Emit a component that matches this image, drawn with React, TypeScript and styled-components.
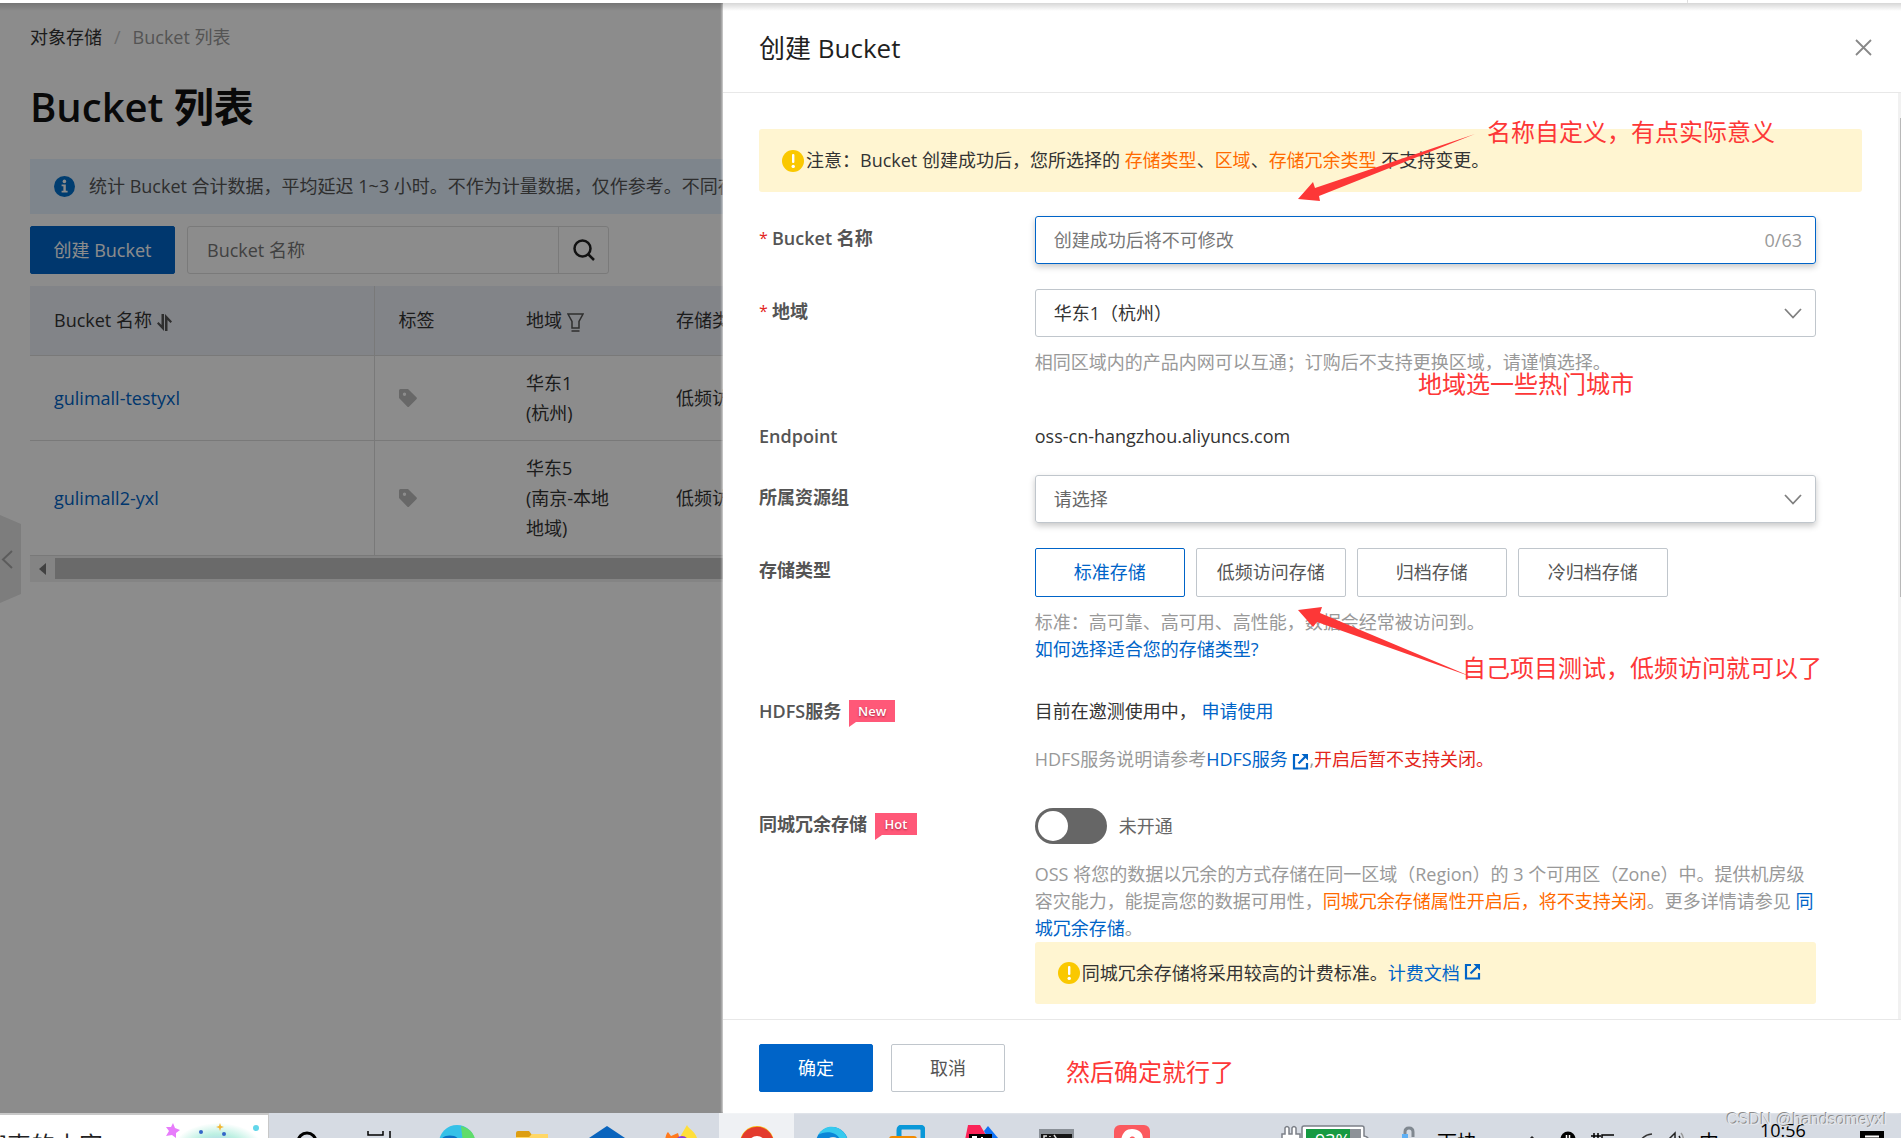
import React from "react";
import styled, { createGlobalStyle } from "styled-components";

const GlobalStyle = createGlobalStyle`
  *, *::before, *::after { box-sizing: border-box; }
  body {
    margin: 0;
    background: #fff;
    color: #333;
    font: 18px/27px "Open Sans", "Noto Sans CJK SC", sans-serif;
  }
  button, input, select { font: inherit; color: inherit; margin: 0; }
  a { color: #0064c8; text-decoration: none; }
  h1, h2, p { margin: 0; font-weight: 400; }
`;

/* ---------- shell ---------- */

const Screen = styled.div`
  position: relative;
  display: grid;
  grid-template-rows: 3px minmax(0, 1fr) 25px;
  height: 100vh;
  overflow: hidden;
`;

const TopStrip = styled.div`
  display: flex;
  justify-content: flex-end;
  background: #fff;
`;

const StripEnd = styled.div`
  width: 214px;
  border-left: 1px solid #ddd;
`;

const Main = styled.main`
  position: relative;
  display: grid;
  grid-template-columns: 723px minmax(0, 1fr);
  min-height: 0;

  &::after {
    content: "";
    position: absolute;
    inset: 0 0 auto 0;
    height: 8px;
    background: linear-gradient(rgba(0, 0, 0, 0.16), rgba(0, 0, 0, 0));
  }
`;

/* ---------- bucket list page ---------- */

const ListPage = styled.section`
  position: relative;
  overflow: hidden;
  padding: 21px 0 0 30px;
  background: #fff;
`;

const Mask = styled.div`
  position: absolute;
  inset: 0;
  background: rgba(0, 0, 0, 0.45);
`;

const Breadcrumb = styled.nav`
  display: flex;
  gap: 12px;
  color: #999;

  a { color: #333; }
  span { color: #c4c4c4; }
`;

const PageTitle = styled.h1`
  margin: 26px 0 22px;
  color: #111;
  font-size: 40px;
  font-weight: 600;
  line-height: 60px;
`;

const InfoBar = styled.div`
  display: flex;
  align-items: center;
  gap: 14px;
  height: 55px;
  padding-left: 24px;
  background: #e5f2ff;
  color: #555;
  white-space: nowrap;

  svg { flex: none; }
`;

const Toolbar = styled.div`
  display: flex;
  gap: 12px;
  margin: 12px 0;
`;

const Button = styled.button<{ $primary?: boolean; $width: number }>`
  width: ${(p) => p.$width}px;
  height: 48px;
  padding: 0;
  border: 1px solid ${(p) => (p.$primary ? "#0064c8" : "#c0c6cc")};
  border-radius: 2px;
  background: ${(p) => (p.$primary ? "#0064c8" : "#fff")};
  color: ${(p) => (p.$primary ? "#fff" : "#555")};
`;

const SearchBox = styled.div`
  display: flex;
  width: 422px;
  height: 48px;
  border: 1px solid #dedede;
  border-radius: 3px;

  input {
    flex: 1;
    min-width: 0;
    padding: 0 19px;
    border: 0;
    background: none;
    outline: 0;
  }
  input::placeholder { color: #777; opacity: 1; }
  button {
    display: grid;
    place-items: center;
    width: 50px;
    padding: 0;
    border: 0;
    border-left: 1px solid #dedede;
    background: none;
  }
`;

const BucketTable = styled.table`
  width: 860px;
  table-layout: fixed;
  border-collapse: collapse;
  line-height: 30px;

  th, td {
    padding: 12px 24px;
    border-bottom: 1px solid #dcdcdc;
    text-align: left;
    font-weight: 400;
    white-space: nowrap;
  }
  th { height: 69px; background: #edf0f7; }
  th:first-child, td:first-child { border-right: 1px solid #dcdcdc; }
  th svg { vertical-align: middle; }
  td svg { display: block; }
`;

const HScroll = styled.div`
  display: flex;
  align-items: center;
  gap: 9px;
  width: 860px;
  height: 26px;
  padding-left: 9px;
  background: #f1f1f1;
`;

const HThumb = styled.div`
  flex: 1;
  height: 21px;
  background: #c1c1c1;
`;

const CollapseTab = styled.button`
  position: absolute;
  left: 0;
  top: 512px;
  width: 21px;
  height: 88px;
  padding: 0;
  border: 0;
  background: none;
`;

/* ---------- drawer ---------- */

const Drawer = styled.section`
  position: relative;
  display: flex;
  flex-direction: column;
  min-height: 0;
  background: #fff;
  box-shadow: -1px 0 2px rgba(255, 255, 255, 0.7);
`;

const DrawerHeader = styled.header`
  display: flex;
  align-items: center;
  justify-content: space-between;
  height: 90px;
  padding: 0 29px 0 36px;
  border-bottom: 1px solid #e8e8e8;

  h2 { color: #1f1f1f; font-size: 26px; line-height: 36px; }
  button {
    display: grid;
    padding: 0;
    border: 0;
    background: none;
  }
`;

const DrawerBody = styled.div`
  display: flex;
  flex: 1;
  min-height: 0;
  overflow: hidden;
`;

const Form = styled.form`
  flex: 1;
  min-width: 0;
  padding: 36px;
`;

const ScrollTrack = styled.div`
  width: 3px;
  padding: 25px 0 0 2px;
  background: #f1f1f1;
`;

const ScrollThumb = styled.div`
  height: 479px;
  background: #b8b8b8;
`;

const Notice = styled.div<{ $spaced?: boolean }>`
  display: flex;
  align-items: center;
  gap: 2px;
  height: ${(p) => (p.$spaced ? 63 : 62)}px;
  margin-bottom: ${(p) => (p.$spaced ? 24 : 0)}px;
  padding-left: 23px;
  border-radius: 3px;
  background: #fff5d1;

  svg { flex: none; }
`;

const Warn = styled.span`
  color: #ff6a00;
`;

const Danger = styled.span`
  color: #e3251b;
`;

const Row = styled.div<{ $after?: number }>`
  display: grid;
  grid-template-columns: 6fr 17fr 1fr;
  margin-bottom: ${(p) => p.$after ?? 25}px;
`;

const Label = styled.label<{ $top?: number }>`
  display: flex;
  align-items: flex-start;
  padding-top: ${(p) => p.$top ?? 0}px;
  color: #555;
  font-weight: 600;
`;

const Star = styled.span`
  width: 13px;
  color: #e3251b;
  font-size: 16px;
  font-weight: 400;
`;

const Tag = styled.span<{ $width: number }>`
  position: relative;
  width: ${(p) => p.$width}px;
  height: 22px;
  margin: 2px 0 0 8px;
  background: #ff5878;
  color: #fff;
  font-size: 13px;
  line-height: 22px;
  text-align: center;
  text-shadow: 0 1px 2px rgba(120, 0, 30, 0.6);

  &::after {
    content: "";
    position: absolute;
    left: 0;
    top: 22px;
    border-top: 5px solid #ff5878;
    border-right: 7px solid transparent;
  }
`;

const raised = "0 3px 6px rgba(0, 0, 0, 0.22)";

const NameBox = styled.div`
  display: flex;
  align-items: center;
  height: 48px;
  padding: 0 13px 0 18px;
  border: 1px solid #0064c8;
  border-radius: 3px;
  box-shadow: ${raised};
  color: #999;

  input {
    flex: 1;
    min-width: 0;
    padding: 0;
    border: 0;
    outline: 0;
    background: none;
  }
  input::placeholder { color: #777; opacity: 1; }
`;

const SelectBox = styled.div<{ $raised?: boolean }>`
  display: grid;
  align-items: center;
  height: 48px;
  border: 1px solid #c0c6cc;
  border-radius: 3px;
  box-shadow: ${(p) => (p.$raised ? raised : "none")};

  select, svg { grid-area: 1 / 1; }
  select {
    width: 100%;
    height: 46px;
    padding: 0 48px 0 18px;
    border: 0;
    outline: 0;
    appearance: none;
    background: none;
    color: ${(p) => (p.$raised ? "#666" : "#333")};
  }
  svg { justify-self: end; margin-right: 13px; pointer-events: none; }
`;

const Help = styled.p<{ $gap?: number }>`
  margin-top: ${(p) => p.$gap ?? 12}px;
  color: #999;

  svg { vertical-align: -4px; }
`;

const ChoiceRow = styled.div`
  display: flex;
  gap: 11px;
`;

const Choice = styled.label`
  display: grid;
  place-items: center;
  width: 150px;
  height: 49px;
  border: 1px solid #c0c6cc;
  border-radius: 2px;
  color: #555;

  input { position: absolute; opacity: 0; }
  &:has(input:checked) { border-color: #0064c8; color: #0064c8; }
`;

const SwitchRow = styled.div`
  display: flex;
  align-items: center;
  gap: 12px;
  color: #666;

  input {
    appearance: none;
    width: 72px;
    height: 36px;
    padding: 3px;
    border-radius: 18px;
    background: #666;
  }
  input::before {
    content: "";
    display: block;
    width: 30px;
    height: 30px;
    border-radius: 50%;
    background: #fff;
  }
`;

const DrawerFooter = styled.footer`
  display: flex;
  gap: 18px;
  height: 94px;
  padding: 24px 36px;
  border-top: 1px solid #e8e8e8;
`;

/* ---------- hand-made notes over the drawer ---------- */

const Note = styled.span<{ $x: number; $y: number }>`
  position: absolute;
  left: ${(p) => p.$x}px;
  top: ${(p) => p.$y}px;
  color: #fd3737;
  font-size: 24px;
  line-height: 36px;
  white-space: nowrap;
`;

const Arrow = styled.svg<{ $x: number; $y: number }>`
  position: absolute;
  left: ${(p) => p.$x}px;
  top: ${(p) => p.$y}px;
  fill: #fd3737;
`;

/* ---------- taskbar ---------- */

const Taskbar = styled.footer`
  display: flex;
  overflow: hidden;
  background: #d6dbe3;
  color: #000;
`;

const TaskSearch = styled.div`
  display: flex;
  justify-content: space-between;
  width: 269px;
  height: 60px;
  overflow: hidden;
  border: solid #c8c8c8;
  border-width: 2px 1px 0 0;
  background: #fff;
`;

const TaskSearchText = styled.span`
  width: 103px;
  direction: rtl;
  overflow: hidden;
  color: #222;
  font-size: 24px;
  line-height: 60px;
  white-space: nowrap;
`;

const TaskApp = styled.div<{ $active?: boolean }>`
  display: flex;
  justify-content: center;
  width: 75px;
  height: 60px;
  padding-top: 12px;
  background: ${(p) => (p.$active ? "#eff1f4" : "transparent")};
`;

const Tray = styled.div`
  display: flex;
  margin-left: auto;
`;

const TraySlot = styled.div<{ $width: number }>`
  width: ${(p) => p.$width}px;
  line-height: 34px;
  white-space: nowrap;
`;

const TrayText = styled(TraySlot)`
  padding-top: 13px;
  font-size: 20px;
`;

const Watermark = styled.span`
  position: absolute;
  right: 14px;
  bottom: 6px;
  color: #e4e6ea;
  font: 16px/24px "Liberation Sans", sans-serif;
  text-shadow: -1px -1px 0 #8c8c8c;
`;

/* ---------- icons ---------- */

const AlertIcon = () => (
  <svg width="22" height="22" viewBox="0 0 22 22">
    <circle cx="11" cy="11" r="11" fill="#fac800" />
    <rect x="10" y="4" width="2.4" height="9" rx="1" fill="#fff" />
    <circle cx="11.2" cy="16.4" r="1.7" fill="#fff" />
  </svg>
);

const InfoIcon = () => (
  <svg width="21" height="21" viewBox="0 0 21 21">
    <circle cx="10.5" cy="10.5" r="10.5" fill="#0070cc" />
    <circle cx="10.4" cy="5.4" r="1.8" fill="#fff" />
    <path d="M7.6 8.6h4.2v6.2h1.8v1.7H7.6v-1.7h1.8v-4.5H7.6z" fill="#fff" />
  </svg>
);

const ExternalIcon = () => (
  <svg width="17" height="17" viewBox="0 0 17 17" fill="none" stroke="#0064c8" strokeWidth="2.2">
    <path d="M7 2H2v13.500h13V10" />
    <path d="M6.500 10.500L14 3" />
    <path d="M9.500 1H16v6.500z" fill="#0064c8" stroke="none" />
  </svg>
);

const ChevronIcon = () => (
  <svg width="18" height="11" viewBox="0 0 18 11" fill="none" stroke="#808080" strokeWidth="1.800">
    <path d="M1 1l8 8.500L17 1" />
  </svg>
);

const TagIcon = () => (
  <svg width="18" height="18" viewBox="0 0 18 18">
    <path
      fillRule="evenodd"
      d="M0 1.500Q0 0 1.500 0H9l8.400 8.200q1 1 0 2L10.200 17.400q-1 1-2 0L0 9zM5.500 3.600a1.700 1.700 0 1 0 0 3.400a1.700 1.700 0 0 0 0-3.400z"
      fill="#bdbdbd"
    />
  </svg>
);

const SortIcon = () => (
  <svg width="15" height="17" viewBox="0 0 15 17" fill="#555">
    <path d="M4.500 0H7v17L0 9.500l1.500-1.500 3 3z" />
    <path d="M10.500 17H8V0l7 7.500L13.500 9l-3-3z" />
  </svg>
);

const FilterIcon = () => (
  <svg width="17" height="19" viewBox="0 0 17 19" fill="none" stroke="#555" strokeWidth="1.500">
    <path d="M1 1h15l-4 7.500V15H5V8.500z" />
    <path d="M4.500 18h8" />
  </svg>
);

const appIcons: { id: string; active?: boolean; art: React.ReactNode }[] = [
  { id: "cortana", art: <circle cx="18" cy="17" r="9" fill="none" stroke="#000" strokeWidth="3" /> },
  {
    id: "task-view",
    art: <path d="M4 6v4h15V6M4 14h15M26 6v7" fill="none" stroke="#000" strokeWidth="1.500" />,
  },
  {
    id: "edge",
    art: (
      <>
        <circle cx="18" cy="18" r="18" fill="#35c1e8" />
        <path d="M22 1c9 2 15 9 14 17H24z" fill="#5fdc6a" />
        <path d="M0 18c2-9 17-10 21-2v8H0z" fill="#0c71c4" />
      </>
    ),
  },
  {
    id: "explorer",
    art: (
      <>
        <path d="M2 8q0-2 2-2h11l3 4v4H2z" fill="#dd9e12" />
        <path d="M2 12h13l3-3h16v20H2z" fill="#ffd766" />
      </>
    ),
  },
  {
    id: "mail",
    art: (
      <>
        <path d="M0 13L18 1l18 12v10H0z" fill="#0a64bd" />
        <path d="M4 13h28v12H4z" fill="#fff" />
      </>
    ),
  },
  {
    id: "firefox",
    art: (
      <>
        <path d="M1 18c0-5 1-9 3-11l3 4 7-3 3 10z" fill="#ff7a1f" />
        <path d="M16 12L23 0c2 5 10 6 11 18H16z" fill="#ffdf3a" />
        <circle cx="18" cy="18" r="7" fill="#8c3bd6" />
      </>
    ),
  },
  {
    id: "chrome",
    active: true,
    art: (
      <>
        <circle cx="18" cy="18" r="17" fill="#fbc116" />
        <path d="M2 13a17 17 0 0 1 32 0H18l-8 8z" fill="#e33b2e" />
        <circle cx="18" cy="20" r="8" fill="#3f7de0" stroke="#fff" strokeWidth="2" />
      </>
    ),
  },
  {
    id: "swirl",
    art: (
      <>
        <circle cx="18" cy="18" r="16" fill="#0a86d8" />
        <path d="M4 10C12-3 30 0 34 16l-8-2c-5-8-15-8-22-4z" fill="#36c9ee" />
        <circle cx="19" cy="20" r="8" fill="#d6dbe3" />
      </>
    ),
  },
  {
    id: "vmware",
    art: (
      <>
        <rect x="10" y="2" width="24" height="24" rx="3" fill="none" stroke="#0a98d8" strokeWidth="5" />
        <rect x="0" y="11" width="28" height="20" rx="3" fill="#f18a00" />
      </>
    ),
  },
  {
    id: "idea",
    art: (
      <>
        <path d="M4 0h12l6 10L0 20z" fill="#fb2458" />
        <path d="M20 6l4-5 10 12-6 8z" fill="#0e72f6" />
        <rect x="5" y="9" width="23" height="20" fill="#000" />
        <path d="M8 12h5M10.500 12v8M18 12v8" stroke="#fff" strokeWidth="2" />
      </>
    ),
  },
  {
    id: "terminal",
    art: (
      <>
        <rect x="0" y="4" width="35" height="28" fill="#8a9097" />
        <rect x="2" y="9" width="31" height="20" fill="#151515" />
        <path d="M8 11H5v4M11 11v1M15 10l4 6" stroke="#ddd" strokeWidth="1.500" fill="none" />
      </>
    ),
  },
  {
    id: "netease",
    art: (
      <>
        <rect width="36" height="36" rx="6" fill="#fb5a5f" />
        <path
          d="M7 22C6 11 10 4 18 4c7 0 11 4 11 10v8H19c3-4 4-8 1-10-4-2-7 3-5 10z"
          fill="#fff"
        />
      </>
    ),
  },
];

const storageTypes = ["标准存储", "低频访问存储", "归档存储", "冷归档存储"];

const buckets = [
  { name: "gulimall-testyxl", region: ["华东1", "(杭州)"], type: "低频访问" },
  { name: "gulimall2-yxl", region: ["华东5", "(南京-本地", "地域)"], type: "低频访问" },
];

/* ---------- parts ---------- */

function BucketList() {
  return (
    <ListPage>
      <Breadcrumb aria-label="breadcrumb">
        <a href="#oss">对象存储</a>
        <span>/</span>
        Bucket 列表
      </Breadcrumb>
      <PageTitle>Bucket 列表</PageTitle>
      <InfoBar>
        <InfoIcon />
        统计 Bucket 合计数据，平均延迟 1~3 小时。不作为计量数据，仅作参考。不同存储
      </InfoBar>
      <Toolbar>
        <Button type="button" $primary $width={145}>创建 Bucket</Button>
        <SearchBox>
          <input aria-label="Bucket 名称" placeholder="Bucket 名称" />
          <button type="button" aria-label="搜索">
            <svg width="22" height="22" viewBox="0 0 22 22" fill="none" stroke="#222" strokeWidth="2.500">
              <circle cx="9.500" cy="9.500" r="8" />
              <path d="M15 15l6 6" />
            </svg>
          </button>
        </SearchBox>
      </Toolbar>
      <BucketTable>
        <colgroup>
          <col width="344" />
          <col width="128" />
          <col width="150" />
          <col />
        </colgroup>
        <thead>
          <tr>
            <th>Bucket 名称 <SortIcon /></th>
            <th>标签</th>
            <th>地域 <FilterIcon /></th>
            <th>存储类型</th>
          </tr>
        </thead>
        <tbody>
          {buckets.map((b) => (
            <tr key={b.name}>
              <td><a href="#bucket">{b.name}</a></td>
              <td><TagIcon /></td>
              <td>
                {b.region.map((line) => (
                  <div key={line}>{line}</div>
                ))}
              </td>
              <td>{b.type}</td>
            </tr>
          ))}
        </tbody>
      </BucketTable>
      <HScroll>
        <svg width="7" height="12" viewBox="0 0 7 12"><path d="M7 0v12L0 6z" fill="#777" /></svg>
        <HThumb />
      </HScroll>
      <CollapseTab type="button" aria-label="收起">
        <svg width="21" height="88" viewBox="0 0 21 88">
          <path d="M0 0l21 9v70L0 88z" fill="#e4e4e4" />
          <path d="M12 36L3 44.500l9 8.500" fill="none" stroke="#a8a8a8" strokeWidth="2" />
        </svg>
      </CollapseTab>
      <Mask />
    </ListPage>
  );
}

function CreateDrawer() {
  return (
    <Drawer>
      <DrawerHeader>
        <h2>创建 Bucket</h2>
        <button type="button" aria-label="关闭">
          <svg width="17" height="17" viewBox="0 0 17 17" stroke="#888" strokeWidth="1.800">
            <path d="M1 1l15 15M16 1L1 16" />
          </svg>
        </button>
      </DrawerHeader>
      <DrawerBody>
        <Form id="create-bucket">
          <Notice $spaced>
            <AlertIcon />
            <p>
              注意：Bucket 创建成功后，您所选择的 <Warn>存储类型</Warn>、<Warn>区域</Warn>、
              <Warn>存储冗余类型</Warn> 不支持变更。
            </p>
          </Notice>
          <Row>
            <Label $top={9} htmlFor="name"><Star>*</Star>Bucket 名称</Label>
            <NameBox>
              <input id="name" placeholder="创建成功后将不可修改" />
              0/63
            </NameBox>
          </Row>
          <Row $after={47}>
            <Label $top={9} htmlFor="region"><Star>*</Star>地域</Label>
            <div>
              <SelectBox>
                <select id="region"><option>华东1（杭州）</option></select>
                <ChevronIcon />
              </SelectBox>
              <Help>相同区域内的产品内网可以互通；订购后不支持更换区域，请谨慎选择。</Help>
            </div>
          </Row>
          <Row>
            <Label as="span">Endpoint</Label>
            <span>oss-cn-hangzhou.aliyuncs.com</span>
          </Row>
          <Row>
            <Label $top={9} htmlFor="group">所属资源组</Label>
            <SelectBox $raised>
              <select id="group"><option>请选择</option></select>
              <ChevronIcon />
            </SelectBox>
          </Row>
          <Row $after={35}>
            <Label as="span" $top={9}>存储类型</Label>
            <div>
              <ChoiceRow role="radiogroup" aria-label="存储类型">
                {storageTypes.map((type, i) => (
                  <Choice key={type}>
                    <input type="radio" name="storage" defaultChecked={i === 0} />
                    {type}
                  </Choice>
                ))}
              </ChoiceRow>
              <Help>
                标准：高可靠、高可用、高性能，数据会经常被访问到。
                <br />
                <a href="#types">如何选择适合您的存储类型?</a>
              </Help>
            </div>
          </Row>
          <Row $after={35}>
            <Label as="span">HDFS服务<Tag $width={46}>New</Tag></Label>
            <div>
              <p>目前在邀测使用中， <a href="#apply">申请使用</a></p>
              <Help $gap={21}>
                HDFS服务说明请参考<a href="#hdfs">HDFS服务 <ExternalIcon /></a>,<Danger>开启后暂不支持关闭。</Danger>
              </Help>
            </div>
          </Row>
          <Row>
            <Label $top={3} htmlFor="zrs">同城冗余存储<Tag $width={42}>Hot</Tag></Label>
            <div>
              <SwitchRow>
                <input id="zrs" type="checkbox" role="switch" />
                未开通
              </SwitchRow>
              <Help $gap={17}>
                OSS 将您的数据以冗余的方式存储在同一区域（Region）的 3 个可用区（Zone）中。提供机房级容灾能力，能提高您的数据可用性，
                <Warn>同城冗余存储属性开启后，将不支持关闭</Warn>。更多详情请参见 <a href="#zrs-doc">同城冗余存储</a>。
              </Help>
              <Notice>
                <AlertIcon />
                <p>同城冗余存储将采用较高的计费标准。<a href="#price">计费文档 <ExternalIcon /></a></p>
              </Notice>
            </div>
          </Row>
        </Form>
        <ScrollTrack><ScrollThumb /></ScrollTrack>
      </DrawerBody>
      <DrawerFooter>
        <Button form="create-bucket" type="button" $primary $width={114}>确定</Button>
        <Button type="button" $width={114}>取消</Button>
      </DrawerFooter>

      <Note $x={764} $y={111}>名称自定义，有点实际意义</Note>
      <Arrow $x={575} $y={130} width="178" height="70" viewBox="0 0 178 70">
        <path d="M0 66L15 49l2 6L177 1 21 63l1 5z" />
      </Arrow>
      <Note $x={695} $y={363}>地域选一些热门城市</Note>
      <Arrow $x={575} $y={603} width="174" height="70" viewBox="0 0 174 70">
        <path d="M0 4L24 1l-2 6 152 64L19 16l-4 5z" />
      </Arrow>
      <Note $x={739} $y={647}>自己项目测试，低频访问就可以了</Note>
      <Note $x={343} $y={1051}>然后确定就行了</Note>
    </Drawer>
  );
}

function DesktopTaskbar() {
  return (
    <Taskbar>
      <TaskSearch>
        <TaskSearchText>搜索的内容</TaskSearchText>
        <svg width="104" height="40" viewBox="0 0 104 40">
          <defs>
            <radialGradient id="glow">
              <stop offset="0" stopColor="#9db8f2" />
              <stop offset="0.600" stopColor="#bdf0e2" />
              <stop offset="1" stopColor="#fff" />
            </radialGradient>
          </defs>
          <ellipse cx="54" cy="36" rx="46" ry="28" fill="url(#glow)" />
          <path d="M9 8l2 5 5 2-4 3 0 5-4-3-6 1 3-5-3-4 5 0z" fill="#e77cfb" />
          <path d="M56 8l1 3 3 1-3 1-1 3-1-3-3-1 3-1z" fill="#f2b632" />
          <circle cx="37" cy="17" r="2" fill="#3366c8" />
          <circle cx="60" cy="19" r="2" fill="#3366c8" />
          <circle cx="92" cy="13" r="3" fill="#62d6ea" />
        </svg>
      </TaskSearch>
      {appIcons.map((app) => (
        <TaskApp key={app.id} $active={app.active}>
          <svg width="36" height="36" viewBox="0 0 36 36">{app.art}</svg>
        </TaskApp>
      ))}
      <Tray>
        <TraySlot $width={121}>
          <svg width="90" height="40" viewBox="0 0 90 40">
            <path
              d="M1 40V21h3v-6q2-3 4 0v6h3v-6q2-3 4 0v6h4v19zM21 40V15q0-2 2-2h58q2 0 2 2v8q5 1 5 5v12z"
              fill="#fff"
              stroke="#7c8088"
              strokeWidth="1.500"
            />
            <rect x="25" y="16" width="55" height="24" fill="#8d9298" />
            <rect x="25" y="16" width="44" height="24" fill="#169a42" />
            <text x="34" y="34" fill="#fff" fontSize="18">93%</text>
          </svg>
        </TraySlot>
        <TraySlot $width={35}>
          <svg width="13" height="40" viewBox="0 0 13 40" fill="none" strokeWidth="3">
            <path d="M3 26v-7q0-4 4-4t4 4v5" stroke="#808890" />
            <path d="M0 21h6v6H0z" fill="#5fb0f5" />
          </svg>
        </TraySlot>
        <TrayText $width={89}>下块</TrayText>
        <TraySlot $width={34}>
          <svg width="12" height="40" viewBox="0 0 12 40" fill="none" stroke="#222" strokeWidth="1.500">
            <path d="M1 29l5-5 5 5" />
          </svg>
        </TraySlot>
        <TraySlot $width={31}>
          <svg width="16" height="40" viewBox="0 0 16 40">
            <circle cx="8" cy="26" r="7.500" />
            <path d="M6.500 22v4M9.500 22v4" stroke="#fff" strokeWidth="1.500" />
          </svg>
        </TraySlot>
        <TraySlot $width={47}>
          <svg width="24" height="40" viewBox="0 0 24 40" fill="none" stroke="#000" strokeWidth="1.500">
            <path d="M3 20v10M7 20v10M0 23h10M11 30v-8h12" />
          </svg>
        </TraySlot>
        <TraySlot $width={29}>
          <svg width="16" height="40" viewBox="0 0 16 40" fill="none" stroke="#333" strokeWidth="1.500">
            <path d="M1 31Q4 22 14 21M8 31q2-4 6-5" />
          </svg>
        </TraySlot>
        <TraySlot $width={32}>
          <svg width="18" height="40" viewBox="0 0 18 40" fill="none" stroke="#222" strokeWidth="1.500">
            <path d="M1 27l7-7v12M12 23q2 3 0 6" />
            <path d="M14 20q4 5 1 10" stroke="#999" />
          </svg>
        </TraySlot>
        <TrayText $width={61}>中</TrayText>
        <TraySlot $width={100}>10:56</TraySlot>
        <TraySlot $width={41}>
          <svg width="24" height="40" viewBox="0 0 24 40">
            <path d="M0 18h24v22H0z" />
            <path d="M5 23.500h14" stroke="#fff" strokeWidth="2" />
          </svg>
        </TraySlot>
      </Tray>
    </Taskbar>
  );
}

export default function App() {
  return (
    <>
      <GlobalStyle />
      <Screen>
        <TopStrip><StripEnd /></TopStrip>
        <Main>
          <BucketList />
          <CreateDrawer />
        </Main>
        <DesktopTaskbar />
        <Watermark>CSDN @handsomeyxl</Watermark>
      </Screen>
    </>
  );
}
